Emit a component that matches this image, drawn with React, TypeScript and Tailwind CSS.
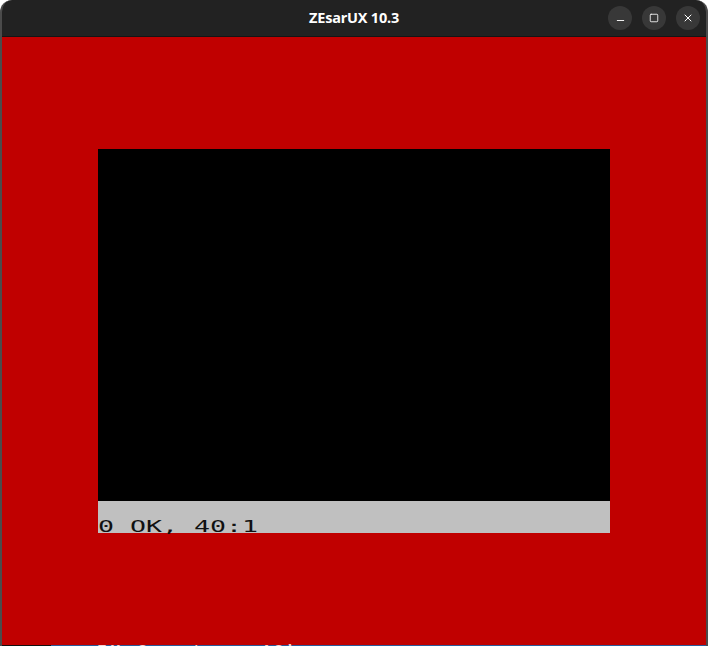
import { Minus, Square, X } from "lucide-react";

function TitleButton({ children }: { children: React.ReactNode }) {
    return (
        <div className="w-6 h-6 rounded-full bg-[#383838] flex items-center justify-center text-white">
            {children}
        </div>
    );
}

export default function App() {
    return (
        <div className="w-[708px] h-[646px] overflow-hidden bg-white">
            <div className="w-[708px] rounded-t-[12px] overflow-hidden border-x-2 border-[#4b4b4b] bg-[#222222]">
                {/* title bar */}
                <div className="relative h-[37px] flex items-center justify-end pr-[6px] gap-[10px] border-b border-[#151515]">
                    <div className="absolute inset-0 flex items-center justify-center">
                        <span className="text-white font-bold text-[14.5px] font-['Noto_Sans',sans-serif] tracking-[-0.2px]">
                            ZEsarUX 10.3
                        </span>
                    </div>
                    <TitleButton>
                        <Minus size={11} strokeWidth={2} className="mt-[5px]" />
                    </TitleButton>
                    <TitleButton>
                        <Square size={10} strokeWidth={2} />
                    </TitleButton>
                    <TitleButton>
                        <X size={12} strokeWidth={2} />
                    </TitleButton>
                </div>

                {/* emulator display with border */}
                <div className="bg-[#c00000] pt-[112px] pb-[112px] px-[96px]">
                    <div className="w-[512px] h-[352px] bg-black" />
                    <div className="w-[512px] h-[32px] bg-[#c0c0c0] flex flex-col justify-end">
                        <div className="h-[16px]">
                            <span className="inline-block origin-left scale-x-[1.66] text-[#111111] font-['DejaVu_Sans_Mono',monospace] text-[16px] leading-[16px] whitespace-pre -translate-y-[3px]">
                                0 OK, 40:1
                            </span>
                        </div>
                    </div>
                </div>

                {/* footer strip, cut off by the window edge */}
                <div className="h-[20px] flex">
                    <div className="w-[49px] bg-[#111111]" />
                    <div className="flex-1 bg-[#2a5b9b] pl-[46px]">
                        <span className="text-[#f4d4d4] font-['Liberation_Mono',monospace] text-[16px] leading-[16px] font-bold tracking-[4px] block -mt-[1px]">
                            ZX Spectrum 48k
                        </span>
                    </div>
                </div>
            </div>
        </div>
    );
}
